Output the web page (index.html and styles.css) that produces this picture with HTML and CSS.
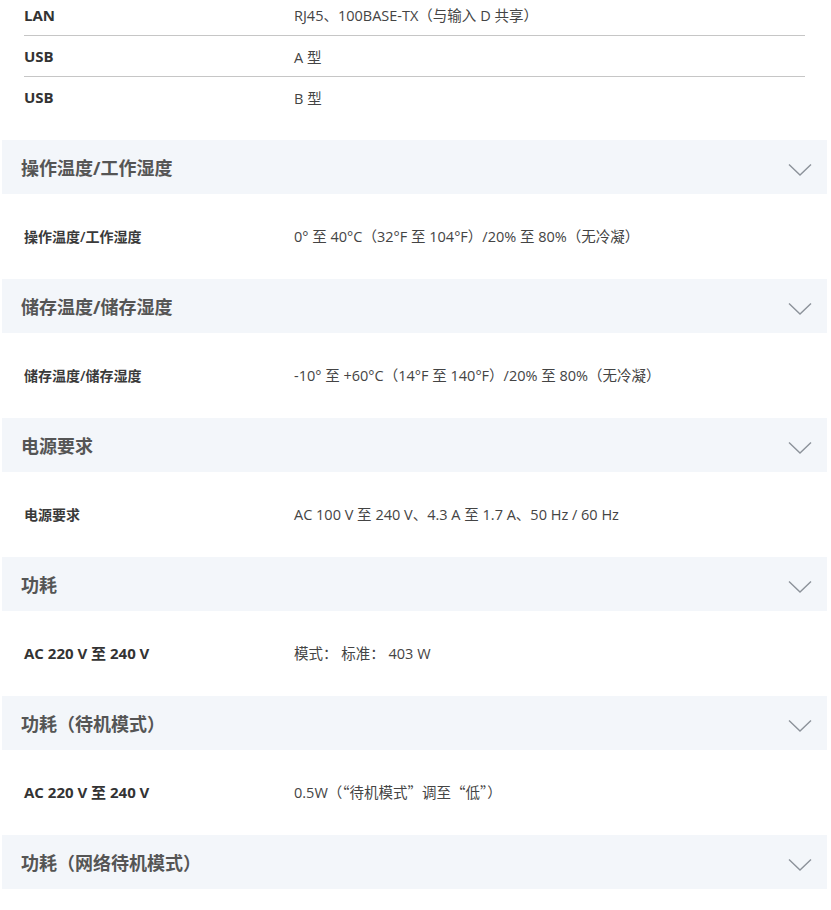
FILE: index.html
```html
<!DOCTYPE html>
<html lang="zh-CN">
<head>
<meta charset="utf-8">
<link rel="stylesheet" href="styles.css">
</head>
<body>
<div class="page">
  <div class="content first">
    <div class="row"><div class="label">LAN</div><div class="value">RJ45、100BASE-TX（与输入 D 共享）</div></div>
    <div class="row"><div class="label">USB</div><div class="value">A 型</div></div>
    <div class="row"><div class="label">USB</div><div class="value">B 型</div></div>
  </div>

  <div class="head"><span>操作温度/工作湿度</span><svg class="chev" viewBox="0 0 24 14"><path d="M1 1.5 L12 12 L23 1.5"/></svg></div>
  <div class="content">
    <div class="row"><div class="label cjk">操作温度/工作湿度</div><div class="value">0° 至 40°C（32°F 至 104°F）/20% 至 80%（无冷凝）</div></div>
  </div>

  <div class="head"><span>储存温度/储存湿度</span><svg class="chev" viewBox="0 0 24 14"><path d="M1 1.5 L12 12 L23 1.5"/></svg></div>
  <div class="content">
    <div class="row"><div class="label cjk">储存温度/储存湿度</div><div class="value">-10° 至 +60°C（14°F 至 140°F）/20% 至 80%（无冷凝）</div></div>
  </div>

  <div class="head"><span>电源要求</span><svg class="chev" viewBox="0 0 24 14"><path d="M1 1.5 L12 12 L23 1.5"/></svg></div>
  <div class="content">
    <div class="row"><div class="label cjk">电源要求</div><div class="value">AC 100 V 至 240 V、4.3 A 至 1.7 A、50 Hz / 60 Hz</div></div>
  </div>

  <div class="head"><span>功耗</span><svg class="chev" viewBox="0 0 24 14"><path d="M1 1.5 L12 12 L23 1.5"/></svg></div>
  <div class="content">
    <div class="row"><div class="label">AC 220 V 至 240 V</div><div class="value">模式： 标准： 403 W</div></div>
  </div>

  <div class="head"><span>功耗（待机模式）</span><svg class="chev" viewBox="0 0 24 14"><path d="M1 1.5 L12 12 L23 1.5"/></svg></div>
  <div class="content">
    <div class="row"><div class="label">AC 220 V 至 240 V</div><div class="value">0.5W<span class="q">（“</span>待机模式<span class="q">”</span>调至<span class="q">“</span>低<span class="q">”）</span></div></div>
  </div>

  <div class="head"><span>功耗（网络待机模式）</span><svg class="chev" viewBox="0 0 24 14"><path d="M1 1.5 L12 12 L23 1.5"/></svg></div>
  <div class="content"></div>
</div>
</body>
</html>
```

FILE: styles.css
```css
html, body {
  margin: 0;
  padding: 0;
  background: #fff;
}
body {
  font-family: "Open Sans", "Noto Sans CJK SC", sans-serif;
  color: #333;
  overflow: hidden;
}
.page {
  margin: -27px 4px 0 2px;
}
.content {
  padding: 21px 22px 23px 22px;
}
.row {
  display: flex;
  align-items: center;
  height: 40px;
  border-top: 1px solid #c6c6c6;
}
.row:first-child {
  border-top: none;
  height: 41px;
}
.label {
  width: 270px;
  flex: none;
  font-size: 15px;
  font-weight: 700;
  color: #333;
}
.label.cjk {
  font-size: 14px;
  font-weight: 600;
  color: #3a3a3a;
}
.value {
  font-size: 14.5px;
  color: #444;
}
.value .q {
  font-family: "Noto Sans CJK SC", sans-serif;
}
.head {
  height: 54px;
  background: #f3f6fa;
  display: flex;
  align-items: center;
  justify-content: space-between;
  padding: 0 15px 0 19px;
  font-size: 18px;
  font-weight: 700;
  color: #555;
}
.chev {
  width: 24px;
  height: 14px;
  margin-top: 5px;
  fill: none;
  stroke: #8c929a;
  stroke-width: 1.4;
}
```
